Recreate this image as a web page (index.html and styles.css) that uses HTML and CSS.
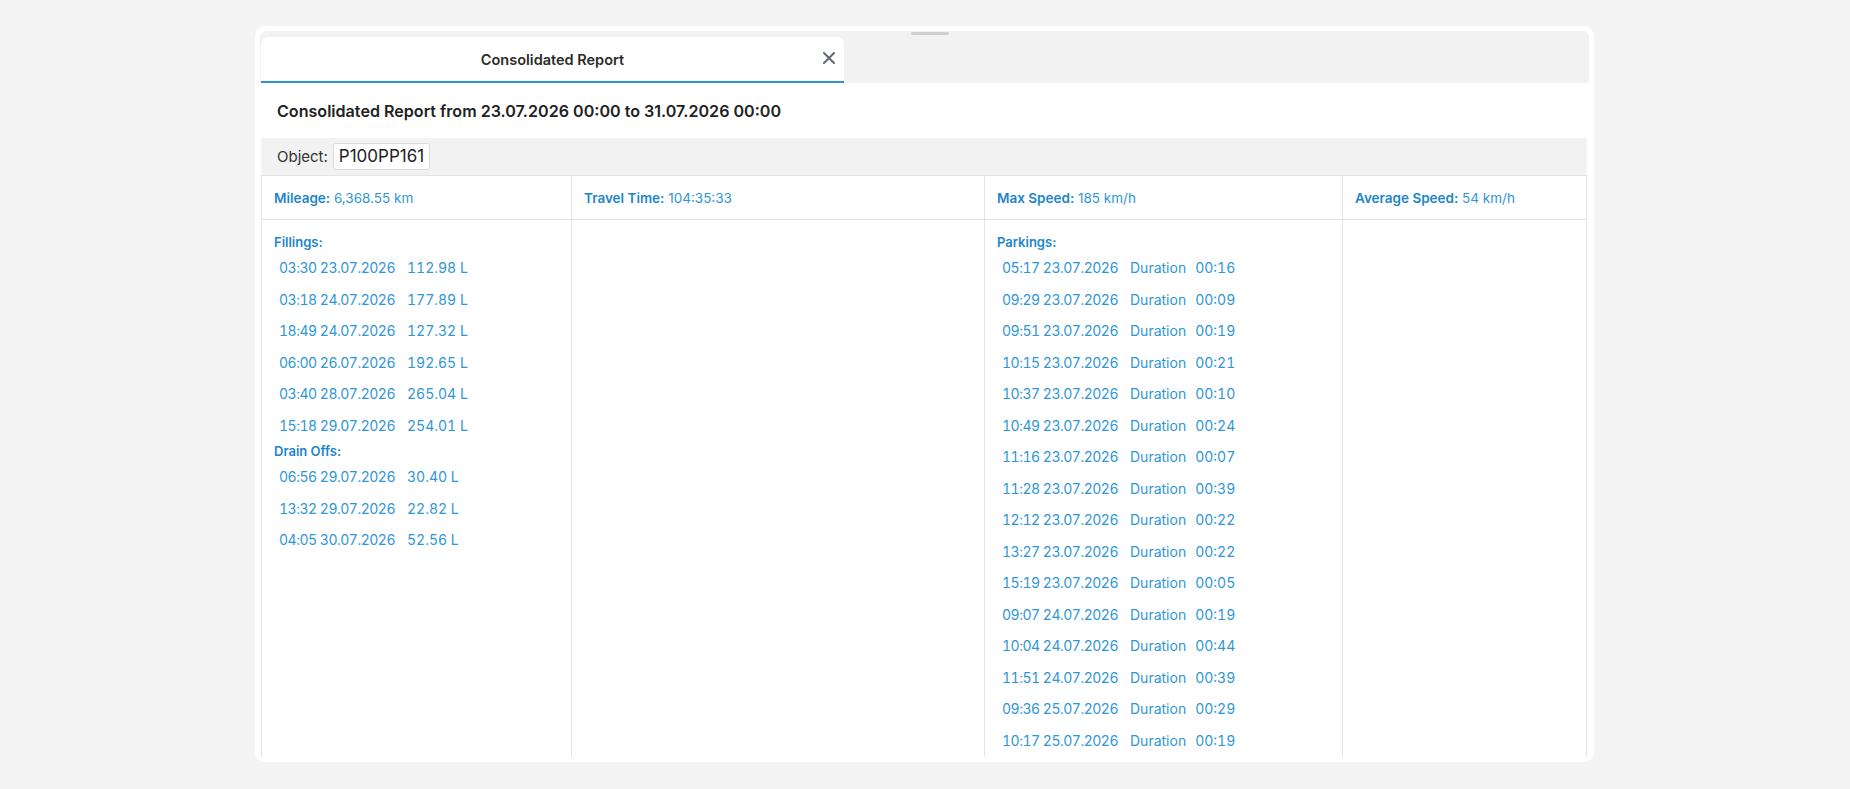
FILE: index.html
```html
<!DOCTYPE html>
<html lang="en">
<head>
    <meta charset="UTF-8">
    <title>Consolidated Report</title>
    <link rel="stylesheet" href="styles.css">
</head>
<body>
    <div class="card">
        <div class="drag-handle"></div>
        <div class="panel">
            <div class="tab-bar">
                <div class="tab">
                    <span></span>
                    <span class="tab-title">Consolidated Report</span>
                    <svg class="tab-close" width="12" height="12" viewBox="0 0 12 12">
                        <path d="M1 1 L11 11 M11 1 L1 11" stroke="#626a75" stroke-width="2" stroke-linecap="round"/>
                    </svg>
                </div>
            </div>

            <h1 class="report-title">Consolidated Report from 23.07.2026 00:00 to 31.07.2026 00:00</h1>

            <div class="report-body">
                <div class="object-bar">
                    <span>Object:</span>
                    <span class="object-box">P100PP161</span>
                </div>

                <table class="summary">
                    <colgroup>
                        <col style="width: 310px">
                        <col style="width: 413px">
                        <col style="width: 358px">
                        <col>
                    </colgroup>
                    <thead>
                        <tr>
                            <th><b>Mileage:</b> 6,368.55 km</th>
                            <th><b>Travel Time:</b> 104:35:33</th>
                            <th><b>Max Speed:</b> 185 km/h</th>
                            <th><b>Average Speed:</b> 54 km/h</th>
                        </tr>
                    </thead>
                    <tbody>
                        <tr>
                            <td>
                                <div class="list-title">Fillings:</div>
                                <div class="entry"><span class="time">03:30 23.07.2026</span><span>112.98 L</span></div>
                                <div class="entry"><span class="time">03:18 24.07.2026</span><span>177.89 L</span></div>
                                <div class="entry"><span class="time">18:49 24.07.2026</span><span>127.32 L</span></div>
                                <div class="entry"><span class="time">06:00 26.07.2026</span><span>192.65 L</span></div>
                                <div class="entry"><span class="time">03:40 28.07.2026</span><span>265.04 L</span></div>
                                <div class="entry"><span class="time">15:18 29.07.2026</span><span>254.01 L</span></div>
                                <div class="list-title">Drain Offs:</div>
                                <div class="entry"><span class="time">06:56 29.07.2026</span><span>30.40 L</span></div>
                                <div class="entry"><span class="time">13:32 29.07.2026</span><span>22.82 L</span></div>
                                <div class="entry"><span class="time">04:05 30.07.2026</span><span>52.56 L</span></div>
                            </td>
                            <td></td>
                            <td>
                                <div class="list-title">Parkings:</div>
                                <div class="entry"><span class="time">05:17 23.07.2026</span><span>Duration</span><span>00:16</span></div>
                                <div class="entry"><span class="time">09:29 23.07.2026</span><span>Duration</span><span>00:09</span></div>
                                <div class="entry"><span class="time">09:51 23.07.2026</span><span>Duration</span><span>00:19</span></div>
                                <div class="entry"><span class="time">10:15 23.07.2026</span><span>Duration</span><span>00:21</span></div>
                                <div class="entry"><span class="time">10:37 23.07.2026</span><span>Duration</span><span>00:10</span></div>
                                <div class="entry"><span class="time">10:49 23.07.2026</span><span>Duration</span><span>00:24</span></div>
                                <div class="entry"><span class="time">11:16 23.07.2026</span><span>Duration</span><span>00:07</span></div>
                                <div class="entry"><span class="time">11:28 23.07.2026</span><span>Duration</span><span>00:39</span></div>
                                <div class="entry"><span class="time">12:12 23.07.2026</span><span>Duration</span><span>00:22</span></div>
                                <div class="entry"><span class="time">13:27 23.07.2026</span><span>Duration</span><span>00:22</span></div>
                                <div class="entry"><span class="time">15:19 23.07.2026</span><span>Duration</span><span>00:05</span></div>
                                <div class="entry"><span class="time">09:07 24.07.2026</span><span>Duration</span><span>00:19</span></div>
                                <div class="entry"><span class="time">10:04 24.07.2026</span><span>Duration</span><span>00:44</span></div>
                                <div class="entry"><span class="time">11:51 24.07.2026</span><span>Duration</span><span>00:39</span></div>
                                <div class="entry"><span class="time">09:36 25.07.2026</span><span>Duration</span><span>00:29</span></div>
                                <div class="entry"><span class="time">10:17 25.07.2026</span><span>Duration</span><span>00:19</span></div>
                            </td>
                            <td></td>
                        </tr>
                    </tbody>
                </table>
            </div>
        </div>
    </div>
</body>
</html>
```

FILE: styles.css
```css
body {
    margin: 0;
    padding: 26px 0 0 255px;
    background-color: #f4f4f4;
    font-family: Inter, "Noto Sans", sans-serif;
    color: #222;
}
.card {
    position: relative;
    width: 1339px;
    height: 736px;
    padding: 5px;
    box-sizing: border-box;
    background-color: white;
    border-radius: 10px;
}
.drag-handle {
    position: absolute;
    top: 6px;
    left: 656px;
    width: 38px;
    height: 3px;
    border-radius: 2px;
    background-color: #cfcfcf;
}
.panel {
    height: 100%;
    overflow: hidden;
    border-radius: 6px 6px 0 0;
}
.tab-bar {
    height: 52px;
    padding: 6px 0 0 1px;
    box-sizing: border-box;
    background-color: #f2f2f2;
}
.tab {
    width: 583px;
    height: 46px;
    box-sizing: border-box;
    display: grid;
    grid-template-columns: 28px 1fr 28px;
    align-items: center;
    background-color: white;
    border-radius: 8px 8px 0 0;
    border-bottom: 2px solid #3093d8;
}
.tab-title {
    text-align: center;
    font-size: 14.5px;
    font-weight: 600;
    color: #2b2b2b;
}
.tab-close {
    display: block;
    justify-self: end;
    margin: -2px 9px 0 0;
}
.report-title {
    margin: 0;
    height: 55px;
    padding-left: 17px;
    display: flex;
    align-items: center;
    font-size: 16.1px;
    font-weight: 600;
    color: #222;
}
.report-body {
    margin: 0 2px 0 1px;
}
.object-bar {
    height: 37px;
    padding-left: 16px;
    display: flex;
    align-items: center;
    gap: 5px;
    background-color: #f2f2f2;
    font-size: 15px;
    color: #333;
}
.object-box {
    height: 27px;
    line-height: 25px;
    padding: 0 5px;
    box-sizing: border-box;
    background-color: white;
    border: 1px solid #dcdcdc;
    border-radius: 3px;
    font-size: 17px;
    color: #222;
}
.summary {
    width: 100%;
    border-collapse: collapse;
    table-layout: fixed;
    color: #3096d6;
}
.summary th, .summary td {
    border: 1px solid #e4e4e4;
    text-align: left;
    padding: 0 12px;
}
.summary th {
    height: 43px;
    font-size: 13.5px;
    font-weight: normal;
}
.summary th b {
    color: #1d86c9;
    font-weight: 600;
}
.summary td {
    height: 560px;
    vertical-align: top;
    padding-top: 12px;
    font-size: 14px;
}
.list-title {
    line-height: 20px;
    font-size: 13px;
    font-weight: 600;
    color: #1d86c9;
}
.entry {
    display: flex;
    gap: 12px;
    padding: 6px 0 6px 5px;
    line-height: 19.5px;
    font-variant-numeric: tabular-nums;
}
.entry .time {
    width: 116px;
    letter-spacing: -0.5px;
}
.entry span + span + span {
    margin-left: -3px;
}
```
